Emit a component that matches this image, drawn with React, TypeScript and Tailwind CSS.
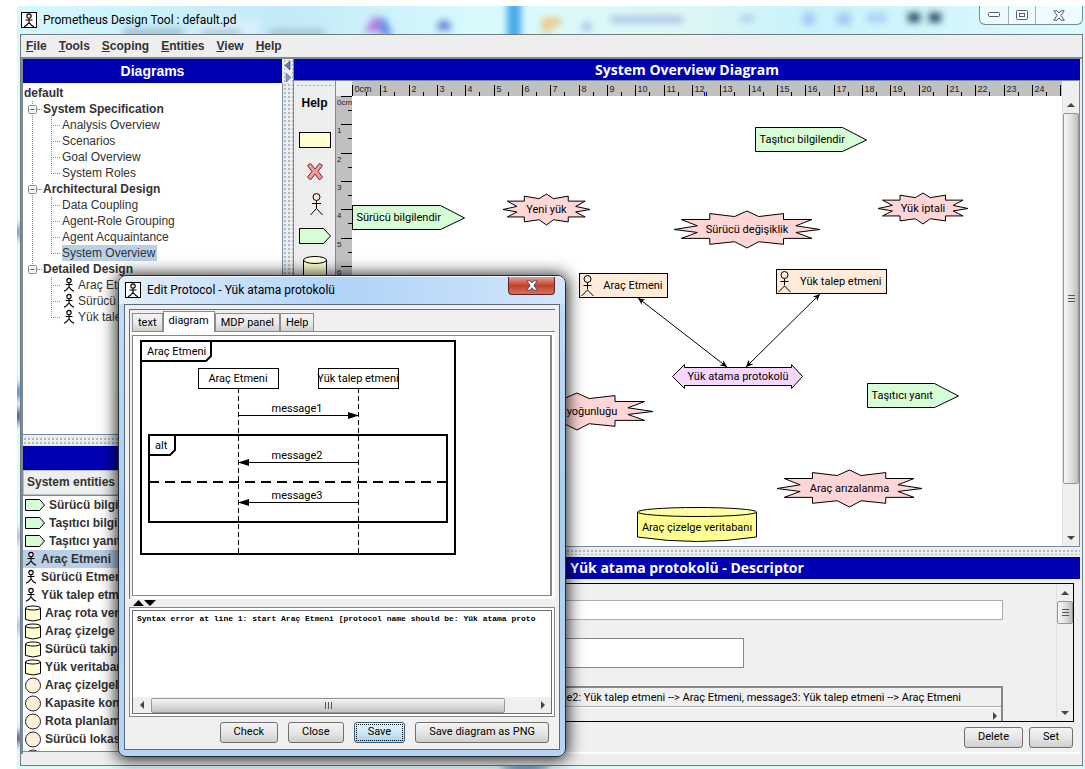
import { ReactNode } from "react";

const UI_FONT = "font-[Roboto,'Noto_Sans',sans-serif]";
const HEADER_FONT = "font-['Open_Sans','Noto_Sans',sans-serif]";

const MENUS = ["File", "Tools", "Scoping", "Entities", "View", "Help"];

const TREE = [
  {
    title: "System Specification",
    items: ["Analysis Overview", "Scenarios", "Goal Overview", "System Roles"],
  },
  {
    title: "Architectural Design",
    items: ["Data Coupling", "Agent-Role Grouping", "Agent Acquaintance", "System Overview"],
  },
  {
    title: "Detailed Design",
    items: ["Araç Etmeni", "Sürücü Etmeni", "Yük talep etmeni"],
    agents: true,
  },
];

type EntityKind = "percept" | "agent" | "data" | "role";

const ENTITIES: { kind: EntityKind; name: string }[] = [
  { kind: "percept", name: "Sürücü bilgilendir" },
  { kind: "percept", name: "Taşıtıcı bilgilendir" },
  { kind: "percept", name: "Taşıtıcı yanıt" },
  { kind: "agent", name: "Araç Etmeni" },
  { kind: "agent", name: "Sürücü Etmeni" },
  { kind: "agent", name: "Yük talep etmeni" },
  { kind: "data", name: "Araç rota veritabanı" },
  { kind: "data", name: "Araç çizelge veritabanı" },
  { kind: "data", name: "Sürücü takip" },
  { kind: "data", name: "Yük veritabanı" },
  { kind: "role", name: "Araç çizelgeleme" },
  { kind: "role", name: "Kapasite kontrol" },
  { kind: "role", name: "Rota planlama" },
  { kind: "role", name: "Sürücü lokasyon" },
  { kind: "role", name: "" },
];

export default function App() {
  return (
    <div className="relative h-screen min-h-[640px] w-full overflow-hidden bg-white pt-1.5 pl-[17px] font-['Liberation_Sans',Arial,sans-serif] text-xs text-[#333]">
      <div className="relative flex h-full flex-col bg-[#dcfafc] pr-[2px] pb-[3px] pl-[3px]">
        <EdgeGlow />
        <TitleBar />
        <div className="relative flex min-h-0 flex-1 flex-col border border-[#6f7c80] bg-[#eee]">
          <nav className="flex h-[22px] shrink-0 items-center gap-3 px-[5px]">
            {MENUS.map((m) => (
              <button key={m} className="font-bold first-letter:underline">
                {m}
              </button>
            ))}
          </nav>
          <div className="flex min-h-0 flex-1 border-t-2 border-l-2 border-[#7a8a99] pr-[2px]">
            <LeftColumn />
            <div className="w-[10px] shrink-0 bg-[#eee] bg-[radial-gradient(#b0b9c2_1px,transparent_1px)] bg-[size:4px_4px] pt-0.5">
              <svg width="6" height="22" className="ml-0.5 bg-[#eee]">
                <path d="M5 0v9L0 4.500z" fill="#5c80c0" stroke="#333" strokeWidth=".6" />
                <path d="M1 12v9l5-4.500z" fill="#7a9cd8" stroke="#667" strokeWidth=".6" />
              </svg>
            </div>
            <div className="flex min-w-0 flex-1 flex-col border-l border-[#7a8a99]">
              <PanelHeader className={`h-[21px] ${HEADER_FONT}`}>System Overview Diagram</PanelHeader>
              <DiagramPane />
              <Grip className="h-[10px]" />
              <Descriptor />
            </div>
          </div>
          <div className="h-[11px] shrink-0 bg-[#eee]" />
        </div>
      </div>
      <EditDialog />
    </div>
  );
}

/* Blurred desktop colours that shine through the glass frame */
function EdgeGlow() {
  return (
    <svg className="absolute inset-0 h-full w-full" aria-hidden="true">
      <defs>
        <filter id="soft" x="-50%" y="-50%" width="200%" height="200%">
          <feGaussianBlur stdDeviation="3.500" />
        </filter>
        <linearGradient id="glass" x1="0" x2="1" y1="0" y2="0">
          <stop offset="0" stopColor="#d5f8fc" />
          <stop offset=".25" stopColor="#c4eaf7" />
          <stop offset=".44" stopColor="#d8fbfd" />
          <stop offset=".62" stopColor="#dff6f3" />
          <stop offset=".74" stopColor="#c8f3fb" />
          <stop offset="1" stopColor="#dcfafd" />
        </linearGradient>
      </defs>
      <rect width="100%" height="30" fill="url(#glass)" />
      <g filter="url(#soft)">
        <rect x="106" y="22" width="60" height="10" fill="#86a3c0" opacity=".6" />
        <rect x="180" y="14" width="62" height="14" fill="#d9f2fa" />
        <rect x="184" y="23" width="40" height="9" fill="#86a3c0" opacity=".5" />
        <rect x="252" y="23" width="56" height="9" fill="#86a3c0" opacity=".5" />
        <path d="M347 26l10-16 5 2 4 14z" fill="#b07ee0" />
        <path d="M362 12h6l8 18h-12z" fill="#5e8ce6" />
        <path d="M420 20q7-12 14 0v4h-14z" fill="#5b7fd0" />
        <rect x="490" y="-10" width="14" height="50" fill="#4aa8ea" />
        <path d="M525 26V12h19v8h-10v8z" fill="#f0c888" />
        <path d="M564 24l6-10 5 10z" fill="#8fb0ea" />
        <rect x="594" y="10" width="72" height="7" fill="#92aee0" opacity=".7" />
        <rect x="724" y="10" width="12" height="5" fill="#7899d8" opacity=".6" />
        <rect x="786" y="7" width="12" height="12" fill="#8ba8ee" opacity=".6" />
        <rect x="820" y="7" width="14" height="12" fill="#8ba8ee" opacity=".6" />
        <rect x="850" y="7" width="20" height="10" fill="#9bb9ee" opacity=".6" />
        <rect x="891" y="7" width="12" height="9" fill="#25405f" />
        <rect x="912" y="7" width="12" height="9" fill="#25405f" />
        <ellipse cx="0" cy="386" rx="4" ry="8" fill="#1560e0" />
        <ellipse cx="0" cy="410" rx="4" ry="8" fill="#171790" />
        <ellipse cx="0" cy="732" rx="4" ry="7" fill="#171790" />
        <ellipse cx="0" cy="530" rx="3" ry="8" fill="#a98be0" />
        <ellipse cx="0" cy="620" rx="3" ry="8" fill="#a98be0" />
        <ellipse cx="0" cy="226" rx="3" ry="8" fill="#2b64c0" />
        <ellipse cx="508" cy="762" rx="24" ry="3" fill="#2d64a0" />
      </g>
    </svg>
  );
}

function TitleBar() {
  return (
    <header className={`relative flex h-7 shrink-0 items-start justify-between ${UI_FONT}`}>
      <div className="flex items-center gap-1.5 pt-1.5 pl-px text-black">
        <AgentBadge />
        <h1 className="text-xs leading-4">Prometheus Design Tool : default.pd</h1>
      </div>
      <div className="flex h-[19px] overflow-hidden rounded-b-md border border-t-0 border-[#7b8a94] bg-white/50">
        <button aria-label="Minimize" className="flex w-7 items-center justify-center">
          <svg width="12" height="6">
            <rect x=".5" y=".5" width="11" height="4" rx="1" fill="#fff" stroke="#555e68" />
          </svg>
        </button>
        <button aria-label="Restore" className="flex w-7 items-center justify-center border-x border-[#9fb0ba]">
          <svg width="12" height="10">
            <rect x=".5" y=".5" width="11" height="9" rx="1" fill="#fff" stroke="#555e68" />
            <rect x="3.500" y="3.500" width="5" height="3" fill="#fff" stroke="#555e68" />
          </svg>
        </button>
        <button aria-label="Close window" className="flex w-[46px] items-center justify-center">
          <CloseGlyph />
        </button>
      </div>
    </header>
  );
}

function CloseGlyph() {
  return (
    <svg width="12" height="11" viewBox="0 0 12 11">
      <path
        d="M.8.8h3.400L6 3 7.800.8h3.400L7.900 5.400l3.400 4.800H7.900L6 7.800l-1.900 2.400H.7l3.400-4.800z"
        fill="#fff"
        stroke="#4d5660"
        strokeLinejoin="round"
      />
    </svg>
  );
}

function AgentBadge() {
  return (
    <svg width="16" height="16" viewBox="0 0 16 16">
      <rect x=".5" y=".5" width="15" height="15" fill="#fff" stroke="#000" />
      <StickMan x={8} y={1.5} />
    </svg>
  );
}

function StickMan({ x, y, fill = "#fde6d3" }: { x: number; y: number; fill?: string }) {
  return (
    <g transform={`translate(${x} ${y})`} stroke="#000" fill="none" strokeWidth="1.100">
      <circle cx="0" cy="2.600" r="2.200" fill={fill} />
      <path d="M0 5v4M-3.500 6.500h7M-5 13.200l2.500-1.500L0 9l2.500 2.700L5 13.200" />
    </g>
  );
}

function PanelHeader({ children, className }: { children?: ReactNode; className: string }) {
  return (
    <h2 className={`flex shrink-0 items-center justify-center bg-[#0000b3] text-sm font-bold text-white ${className}`}>
      {children}
    </h2>
  );
}

function Grip({ className }: { className: string }) {
  return (
    <div
      className={`shrink-0 border-y-2 border-[#eee] bg-[#eee] bg-[radial-gradient(#b0b9c2_1px,transparent_1px)] bg-[size:4px_4px] ${className}`}
    />
  );
}

function LeftColumn() {
  return (
    <aside className="flex w-[260px] shrink-0 flex-col">
      <PanelHeader className="mr-px h-6">Diagrams</PanelHeader>
      <div className="min-h-0 flex-1 overflow-hidden border-r border-b border-[#7a8a99] bg-white pt-0.5">
        <div className="h-4 pl-px leading-4 font-bold">default</div>
        {TREE.map((section, i) => (
          <TreeSection key={section.title} section={section} last={i === TREE.length - 1} />
        ))}
      </div>
      <Grip className="h-[11px]" />
      <PanelHeader className="h-6" />
      <div className="h-[25px] shrink-0 border border-[#b8c0c8] bg-[#eee] px-[3px] leading-[22px] font-bold">
        System entities
      </div>
      <ul className="mb-[2px] h-[257px] shrink-0 overflow-hidden border-y border-[#7a8a99] bg-white">
        {ENTITIES.map((e, i) => (
          <li key={i} className={`flex h-[18px] items-center gap-1 pl-0.5 font-bold ${i === 3 ? "bg-[#b8cfe5]" : ""}`}>
            <EntityIcon kind={e.kind} />
            <span className="truncate">{e.name}</span>
          </li>
        ))}
      </ul>
    </aside>
  );
}

function TreeSection({
  section,
  last,
}: {
  section: { title: string; items: string[]; agents?: boolean };
  last: boolean;
}) {
  return (
    <div>
      <div className="flex h-4 items-center">
        <svg width="20" height="16" stroke="#8a8a8a">
          <path d={last ? "M9.500 0v8" : "M9.500 0v16"} strokeDasharray="1 1" />
          <path d="M14 8.500h6" strokeDasharray="1 1" />
          <rect x="5.500" y="4.500" width="8" height="8" rx="1" fill="#f4f5f6" />
          <path d="M7.500 8.500h4" stroke="#3a62b0" />
        </svg>
        <span className="font-bold">{section.title}</span>
      </div>
      {section.items.map((item, i) => (
        <div key={item} className="flex h-4 items-center">
          <svg width="39" height="16" stroke="#8a8a8a" strokeDasharray="1 1">
            {!last && <path d="M9.500 0v16" />}
            <path d={i === section.items.length - 1 ? "M28.500 0v8" : "M28.500 0v16"} />
            <path d="M28 8.500h10" />
          </svg>
          {section.agents && (
            <svg width="16" height="16" className="shrink-0">
              <StickMan x={7} y={1} />
            </svg>
          )}
          <span className={item === "System Overview" ? "bg-[#b8cfe5] pr-0.5 leading-4" : "leading-4"}>{item}</span>
        </div>
      ))}
    </div>
  );
}

function EntityIcon({ kind }: { kind: EntityKind }) {
  if (kind === "percept")
    return (
      <svg width="20" height="14" className="shrink-0">
        <path d="M.5 1.500h14l5 5.500-5 5.500h-14z" fill="#d6fdd6" stroke="#000" />
      </svg>
    );
  if (kind === "agent")
    return (
      <svg width="12" height="16" className="shrink-0">
        <StickMan x={6} y={1} />
      </svg>
    );
  if (kind === "data")
    return (
      <svg width="16" height="17" className="shrink-0">
        <path d="M.5 3v11.500q7.500 3 15 0V3" fill="#ffffd0" stroke="#000" />
        <ellipse cx="8" cy="3" rx="7.500" ry="2" fill="#ffffe4" stroke="#000" />
      </svg>
    );
  return (
    <svg width="16" height="17" className="shrink-0">
      <circle cx="8" cy="8.500" r="7.500" fill="#fff1dc" stroke="#222" />
    </svg>
  );
}

const CM = 28.33;

function DiagramPane() {
  return (
    <div className="flex min-h-0 flex-1 border-t border-r border-b border-[#7a8a99] bg-white">
      <div className="flex w-[42px] shrink-0 flex-col items-center overflow-hidden border-r border-[#7a8a99] bg-[#eee] pt-[3px]">
        <div className="h-[3px] w-[38px] shrink-0 bg-[radial-gradient(#aaa_1px,transparent_1px)] bg-[size:4px_3px]" />
        <button className="mt-2 text-xs leading-4 font-bold text-black">Help</button>
        <svg width="34" height="170" className="mt-3 shrink-0" stroke="#000">
          <rect x="1.500" y="9.500" width="31" height="15" fill="#ffffd2" />
          <path
            d="M9.500 42.500l3-2 4.500 5.500 4.500-5.500 3 2-4.500 6 4.500 5.500-3 3-4.500-6-4.500 6-3-3 4.500-5.500z"
            fill="#f49a9a"
            stroke="#6a2525"
          />
          <circle cx="18.500" cy="74" r="3.500" fill="#fde6d3" />
          <path d="M18.500 77.500v8M14 80.500h9M12.500 92l6-6.500 6 6.500" fill="none" />
          <path d="M1.500 105.500h24l7 7.500-7 7.500h-24z" fill="#d6fdd6" />
          <path d="M5.500 137v23h23v-23" fill="#ffffd2" />
          <ellipse cx="17" cy="137" rx="11.500" ry="3.500" fill="#ffffe0" />
        </svg>
      </div>
      <div className="flex w-4 shrink-0 flex-col overflow-hidden">
        <div className="h-[15px] shrink-0 bg-[#eee]" />
        <VerticalRuler />
      </div>
      <div className="flex min-w-0 flex-1 flex-col">
        <HorizontalRuler />
        <div className="min-h-0 flex-1 overflow-hidden">
          <OverviewDiagram />
        </div>
      </div>
      <div className="flex w-[17px] shrink-0 flex-col">
        <div className="h-[15px] bg-[#eee]" />
        <VScroll thumb="h-[371px]" />
      </div>
    </div>
  );
}

function HorizontalRuler() {
  const marks = Array.from({ length: 26 }, (_, i) => i);
  return (
    <div className="h-[15px] shrink-0 overflow-hidden bg-[#c0c0c0]">
      <svg width="1400" height="15" fontSize="9" fill="#222">
        {marks.map((i) => {
          const x = Math.round(i * CM) + 0.5;
          return (
            <g key={i}>
              <path d={`M${x} 4v11M${x + 14} 11v4`} stroke="#000" />
              <text x={x + 2} y="11">
                {i === 0 ? "0cm" : i < 25 ? i : ""}
              </text>
            </g>
          );
        })}
        <path d="M352.500 11v4" stroke="#00f" />
      </svg>
    </div>
  );
}

function VerticalRuler() {
  const marks = Array.from({ length: 17 }, (_, i) => i);
  return (
    <div className="min-h-0 flex-1 bg-[#c0c0c0]">
      <svg width="16" height="450" fontSize="8" fill="#222">
        {marks.map((i) => {
          const y = Math.round(i * CM) + 0.5;
          return (
            <g key={i}>
              <path d={`M5 ${y}h11M12 ${y + 14}h4`} stroke="#000" />
              <text x="1" y={y + 8}>
                {i === 0 ? "0cm" : i}
              </text>
            </g>
          );
        })}
      </svg>
    </div>
  );
}

function VScroll({ thumb }: { thumb: string }) {
  return (
    <div className="flex min-h-0 w-[17px] flex-1 flex-col border-l border-[#e2e2e2] bg-[#efefef]">
      <button aria-label="Scroll up" className="flex h-[17px] shrink-0 items-center justify-center">
        <svg width="8" height="4">
          <path d="M0 4l4-4 4 4z" fill="#444" />
        </svg>
      </button>
      <div
        className={`flex shrink-0 items-center justify-center rounded-xs border border-[#979797] bg-linear-to-r from-[#f6f6f6] via-[#e2e2e2] to-[#bdbdbd] ${thumb}`}
      >
        <svg width="7" height="9">
          <path d="M0 1.500h7M0 4.500h7M0 7.500h7" stroke="#555" />
        </svg>
      </div>
      <div className="flex-1" />
      <button aria-label="Scroll down" className="flex h-[17px] shrink-0 items-center justify-center">
        <svg width="8" height="4">
          <path d="M0 0l4 4 4-4z" fill="#444" />
        </svg>
      </button>
    </div>
  );
}

/* outline of the spiky action shape, as fractions of its box */
const BURST: [number, number][] = [
  [0.5, 0], [0.58, 0.15], [0.75, 0.07], [0.75, 0.23], [0.945, 0.23], [0.835, 0.4],
  [1, 0.5], [0.835, 0.58], [0.945, 0.74], [0.75, 0.74], [0.75, 0.9], [0.58, 0.83],
  [0.5, 1], [0.415, 0.83], [0.245, 0.9], [0.245, 0.74], [0.05, 0.74], [0.16, 0.58],
  [0, 0.5], [0.16, 0.4], [0.05, 0.23], [0.245, 0.23], [0.245, 0.07], [0.415, 0.15],
];

function Burst({ x, y, w, h, label, dx = 0 }: { x: number; y: number; w: number; h: number; label: string; dx?: number }) {
  return (
    <g>
      <polygon points={BURST.map(([px, py]) => `${x + px * w},${y + py * h}`).join(" ")} fill="#ffd6d6" stroke="#000" />
      <text x={x + w / 2 + dx} y={y + Math.floor(h / 2) + 4} textAnchor="middle">
        {label}
      </text>
    </g>
  );
}

function Percept({ x, y, w, label }: { x: number; y: number; w: number; label: string }) {
  return (
    <g>
      <path d={`M${x} ${y}h${w - 24}l24 12.500l-24 11.500h${24 - w}z`} fill="#d6fdd6" stroke="#000" />
      <text x={x + 4} y={y + 15.5}>
        {label}
      </text>
    </g>
  );
}

function Agent({ x, y, w, label }: { x: number; y: number; w: number; label: string }) {
  return (
    <g>
      <rect x={x} y={y} width={w} height="24" fill="#ffebd9" stroke="#000" />
      <g fill="none" stroke="#000">
        <circle cx={x + 8} cy={y + 5.5} r="3.500" />
        <path d={`M${x + 8} ${y + 9}v7M${x + 4} ${y + 12}h8M${x + 2} ${y + 22.5}l6-6l6 6`} />
      </g>
      <text x={x + w - 5} y={y + 15.5} textAnchor="end">
        {label}
      </text>
    </g>
  );
}

function OverviewDiagram() {
  return (
    <svg width="710" height="451" fontSize="11" fill="#000" className={UI_FONT}>
      <defs>
        <marker id="tip" markerWidth="8" markerHeight="8" refX="7" refY="4" orient="auto-start-reverse">
          <path d="M0 .8L7 4 0 7.200 2 4z" fill="#000" />
        </marker>
      </defs>
      <Percept x={403.5} y={31.5} w={111} label="Taşıtıcı bilgilendir" />
      <Percept x={0.5} y={109.5} w={112} label="Sürücü bilgilendir" />
      <Percept x={515.5} y={287.5} w={91} label="Taşıtıcı yanıt" />
      <Burst x={151} y={98} w={87} h={31} label="Yeni yük" />
      <Burst x={526} y={97} w={90} h={31} label="Yük iptali" />
      <Burst x={322} y={115} w={146} h={37} label="Sürücü değişiklik" />
      <Burst x={149} y={297} w={152} h={37} label="yoğunluğu" dx={15} />
      <Burst x={425} y={374} w={145} h={37} label="Araç arızalanma" />
      <Agent x={227.5} y={177.5} w={88} label="Araç Etmeni" />
      <Agent x={424.5} y={173.5} w={110} label="Yük talep etmeni" />
      <g stroke="#000">
        <line x1="286" y1="202" x2="375" y2="271" markerStart="url(#tip)" markerEnd="url(#tip)" />
        <line x1="468" y1="198" x2="394" y2="271" markerStart="url(#tip)" markerEnd="url(#tip)" />
      </g>
      <path d="M320.500 280.500l12-12v3h107v-3l11 12-11 12v-3h-107v3z" fill="#f5d6ff" stroke="#000" />
      <text x="386" y="284" textAnchor="middle">
        Yük atama protokolü
      </text>
      <path d="M285.500 416v25q60 9 119 0v-25" fill="#ffff90" stroke="#000" />
      <ellipse cx="345" cy="416" rx="59.500" ry="4.500" fill="#ffffa6" stroke="#000" />
      <text x="345" y="435" textAnchor="middle">
        Araç çizelge veritabanı
      </text>
    </svg>
  );
}

function Button({ children, focused }: { children: ReactNode; focused?: boolean }) {
  return (
    <button
      className={`flex h-[21px] items-center justify-center rounded-[3px] border px-[13px] text-[11px] text-black ${UI_FONT} ${
        focused
          ? "border-[#2c628b] bg-linear-to-b from-[#eaf6fd] via-[#cde8f6] to-[#a8d4ec] outline-1 -outline-offset-3 outline-dotted outline-black"
          : "border-[#707070] bg-linear-to-b from-[#f4f4f4] via-[#e6e6e6] to-[#cfcfcf]"
      }`}
    >
      {children}
    </button>
  );
}

function Descriptor() {
  return (
    <section className="flex shrink-0 flex-col border-b-2 border-white bg-[#f0f0f0]">
      <PanelHeader className={`h-[22px] ${HEADER_FONT}`}>Yük atama protokolü - Descriptor</PanelHeader>
      <div className="mx-1.5 mt-1 flex h-[139px] border border-black">
        <div className={`flex min-w-0 flex-1 flex-col overflow-hidden pt-4 pr-[53px] pl-2.5 text-[11px] text-black ${UI_FONT}`}>
          <input aria-label="Name" className="h-5 w-full shrink-0 border border-[#abadb3] bg-white px-1" />
          <textarea
            aria-label="Description"
            className="mt-[18px] mr-[259px] h-[30px] shrink-0 resize-none border border-[#828790] bg-white"
          />
          <div className="mt-[18px] flex h-10 shrink-0 flex-col border-2 border-b-0 border-[#828790]">
            <input
              aria-label="Messages"
              readOnly
              className="h-[19px] border-b border-[#abadb3] pr-10 text-right"
              value="message2: Yük talep etmeni --> Araç Etmeni, message3: Yük talep etmeni --> Araç Etmeni"
            />
            <div className="flex h-4 items-center justify-end border-t border-white pr-1">
              <svg width="4" height="8">
                <path d="M0 0l4 4-4 4z" fill="#444" />
              </svg>
            </div>
          </div>
        </div>
        <div className="flex w-[17px] shrink-0 flex-col">
          <VScroll thumb="h-[23px]" />
        </div>
      </div>
      <div className="flex justify-end gap-1.5 px-[7px] pt-[5px] pb-1">
        <Button>Delete</Button>
        <Button>Set</Button>
      </div>
    </section>
  );
}

function EditDialog() {
  return (
    <div
      role="dialog"
      aria-labelledby="dialog-title"
      className={`absolute top-[275px] left-[118px] flex h-[482px] w-[448px] flex-col rounded-lg border border-[#222c36] bg-linear-to-b from-[#c3def8] via-[#a9cdf0] to-[#b7d5f2] shadow-[0_1px_16px_2px_rgba(0,0,0,0.85)] ${UI_FONT}`}
    >
      <header className="flex h-7 shrink-0 items-start justify-between rounded-t-lg border-t border-white/70 bg-linear-to-r from-[#e4effa] via-[#b0d3f8] to-[#d3e6fb] pr-2.5 pl-1.5">
        <div className="flex items-center gap-1.5 pt-[5px] text-black">
          <AgentBadge />
          <h2 id="dialog-title" className="text-xs leading-4">
            Edit Protocol - Yük atama protokolü
          </h2>
        </div>
        <button
          aria-label="Close dialog"
          className="flex h-[18px] w-[47px] items-center justify-center rounded-b-[4px] border border-t-0 border-[#5b2222] bg-linear-to-b from-[#e0a094] via-[#c2402c] to-[#d5705a]"
        >
          <CloseGlyph />
        </button>
      </header>
      <div className="mx-[5px] mb-[6px] flex min-h-0 flex-1 flex-col border border-[#5d6a78] bg-[#f0f0f0] px-1 pt-1 text-[11px] text-black">
        <div className="flex h-[290px] shrink-0 flex-col border-t border-l border-[#6b6f75] pt-0.5 pl-0.5">
          <div role="tablist" className="flex h-[20px] items-end border-b border-[#828790]">
            <Tab label="text" />
            <Tab label="diagram" active />
            <Tab label="MDP panel" />
            <Tab label="Help" />
          </div>
          <div className="flex-1 bg-white pt-[3px] pr-[3px] pb-[3px]">
            <div className="h-full overflow-hidden border border-r-2 border-[#828790]">
              <SequenceDiagram />
            </div>
          </div>
        </div>
        <div className="flex h-[8px] shrink-0 items-center pl-1">
          <svg width="24" height="6">
            <path d="M0 6l5.500-6 5.500 6zM11 0h12l-6 6z" fill="#000" />
          </svg>
        </div>
        <div className="h-[110px] shrink-0 border border-[#828790] bg-white p-0.5">
          <div className="flex h-full flex-col border border-[#6b6f75]">
            <pre className="min-h-0 flex-1 overflow-hidden pt-[3px] pl-1 font-['Liberation_Mono',monospace] text-[8px] leading-[10px] font-bold">
              Syntax error at line 1: start Araç Etmeni [protocol name should be: Yük atama proto
            </pre>
            <div className="flex h-4 shrink-0 items-center bg-[#efefef]">
              <button aria-label="Scroll left" className="flex w-[18px] justify-center">
                <svg width="4" height="8">
                  <path d="M4 0L0 4l4 4z" fill="#444" />
                </svg>
              </button>
              <div className="flex h-[15px] w-[354px] items-center justify-center rounded-xs border border-[#979797] bg-linear-to-b from-[#f4f4f4] via-[#dcdcdc] to-[#c4c4c4]">
                <svg width="9" height="7">
                  <path d="M1.500 0v7M4.500 0v7M7.500 0v7" stroke="#555" />
                </svg>
              </div>
              <button aria-label="Scroll right" className="mr-1.5 ml-auto">
                <svg width="4" height="8">
                  <path d="M0 0l4 4-4 4z" fill="#444" />
                </svg>
              </button>
            </div>
          </div>
        </div>
        <div className="flex justify-end gap-2.5 pt-[5px] pr-1.5">
          <Button>Check</Button>
          <Button>Close</Button>
          <Button focused>Save</Button>
          <Button>Save diagram as PNG</Button>
        </div>
      </div>
    </div>
  );
}

function Tab({ label, active }: { label: string; active?: boolean }) {
  return (
    <button
      role="tab"
      aria-selected={!!active}
      className={`border border-b-0 border-[#898c95] leading-4 ${
        active
          ? "-mb-px h-[21px] bg-white px-[5px] pb-0.5"
          : "h-[18px] bg-linear-to-b from-[#f2f2f2] via-[#ebebeb] to-[#cfcfcf] px-[5px]"
      }`}
    >
      {label}
    </button>
  );
}

function SequenceDiagram() {
  return (
    <svg width="400" height="240" fill="none" stroke="#000" className="block">
      <rect x="8" y="5" width="314" height="213" strokeWidth="2" />
      <path d="M8 25h65l5-5V5" strokeWidth="2" />
      <g strokeDasharray="5 3">
        <path d="M105.500 52v165M225.500 52v165" />
      </g>
      <rect x="65.500" y="32.500" width="80" height="20" fill="#fff" />
      <rect x="185.500" y="32.500" width="80" height="20" fill="#fff" />
      <rect x="16" y="99" width="298" height="87" strokeWidth="2" />
      <path d="M16 119h21l5-5V99" strokeWidth="2" />
      <path d="M16 146h298" strokeWidth="2" strokeDasharray="10 6" />
      <path d="M105 79.500h120M105 126.500h120M105 166.500h120" />
      <g fill="#000" stroke="none">
        <path d="M215 76v7l11-3.500zM116 123v7l-11-3.500zM116 163v7l-11-3.500z" />
        <g fontSize="11">
          <text x="14" y="19">Araç Etmeni</text>
          <text x="22" y="113">alt</text>
          <g textAnchor="middle">
            <text x="105" y="46">Araç Etmeni</text>
            <text x="225" y="46">Yük talep etmeni</text>
            <text x="164" y="76">message1</text>
            <text x="164" y="123">message2</text>
            <text x="164" y="163">message3</text>
          </g>
        </g>
      </g>
    </svg>
  );
}
